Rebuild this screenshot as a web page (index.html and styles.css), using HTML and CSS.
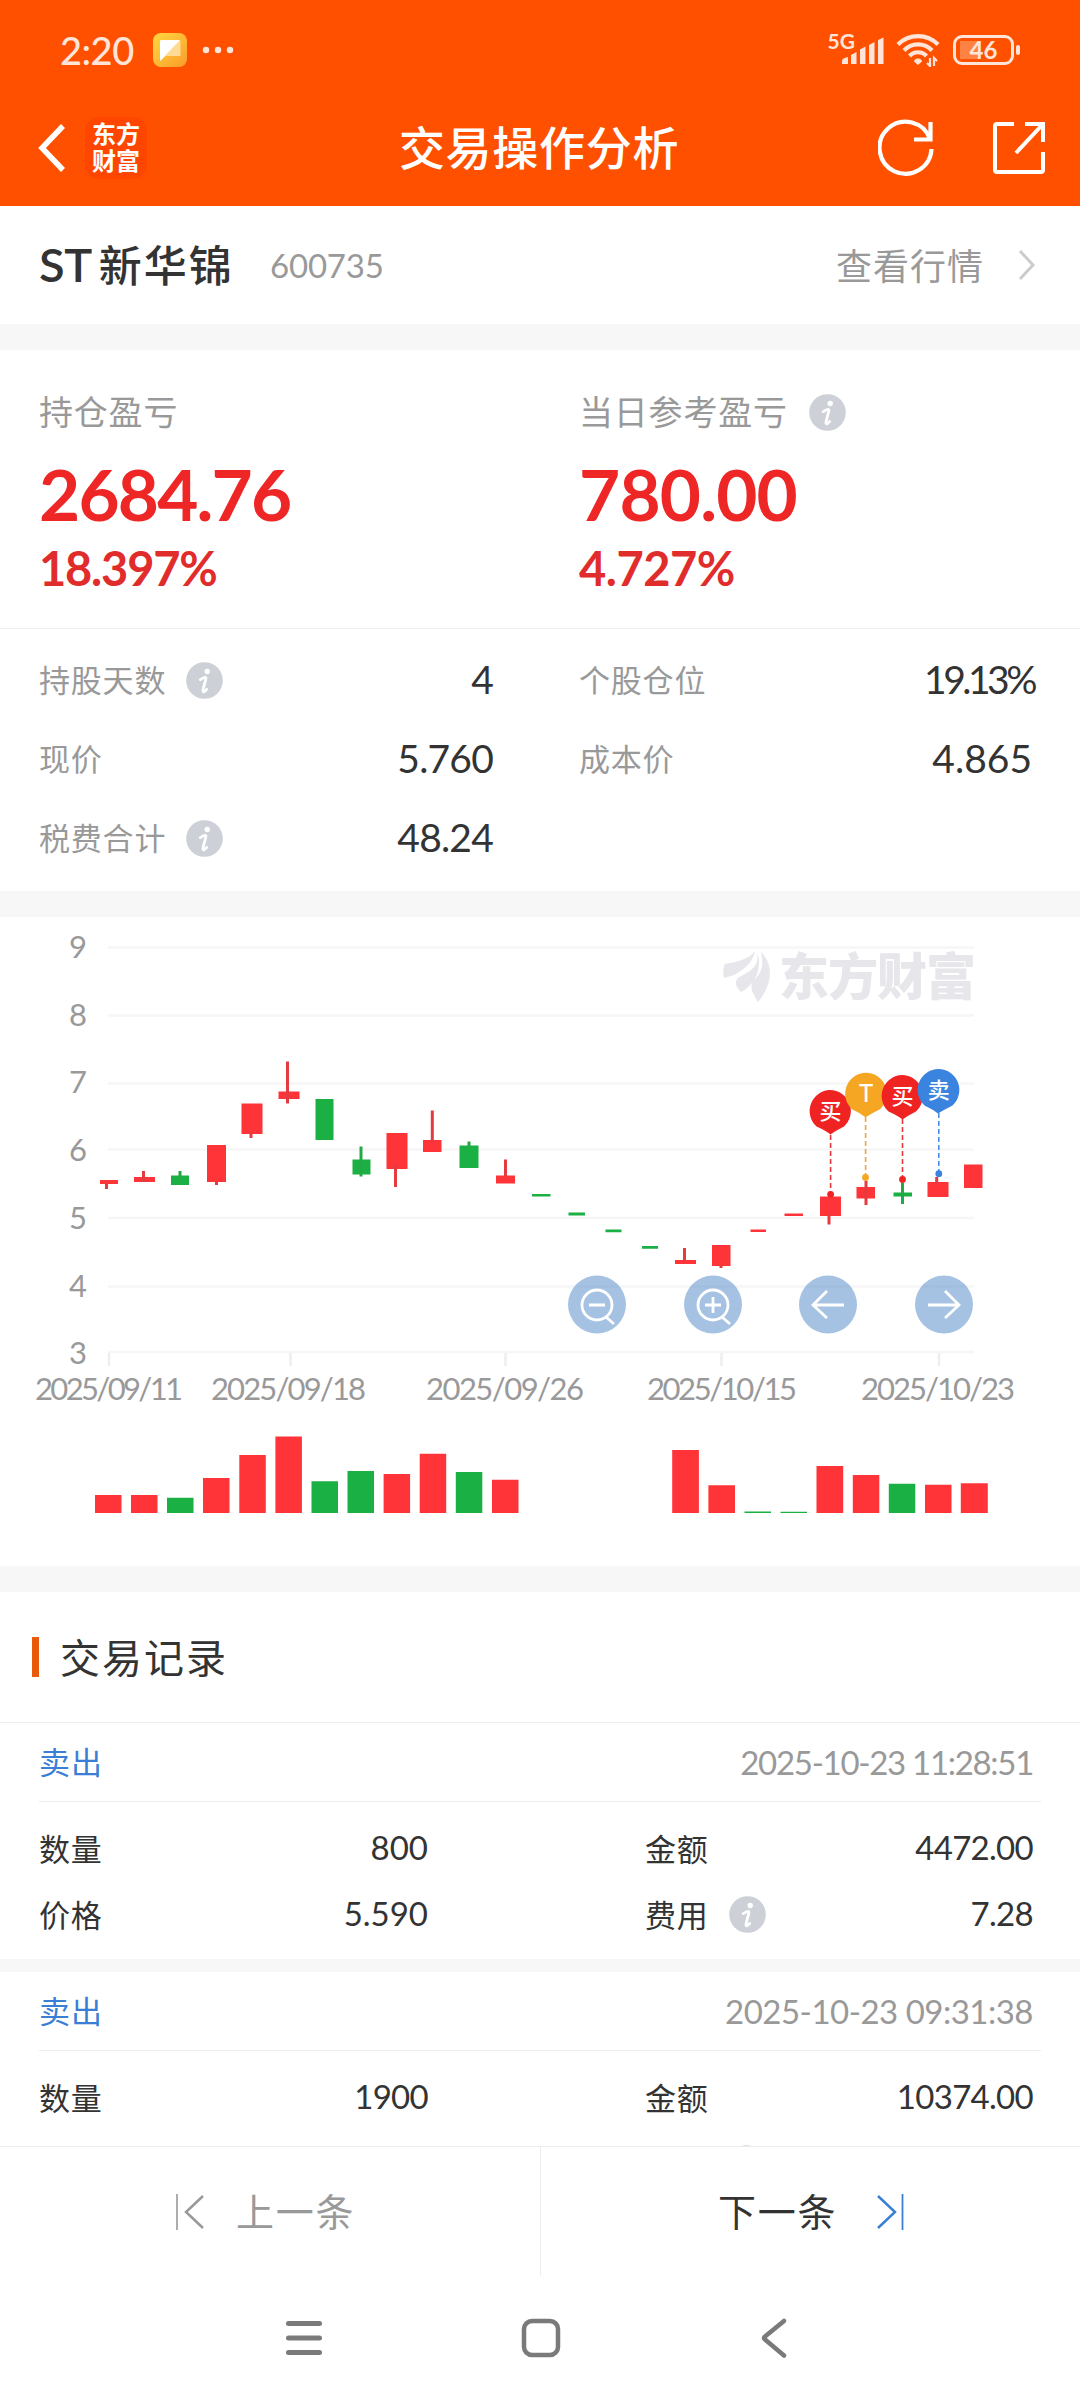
FILE: index.html
```html
<!DOCTYPE html>
<html lang="zh-CN">
<head>
  <meta charset="UTF-8">
  <meta name="viewport" content="width=device-width, initial-scale=1.0">
  <title>交易操作分析</title>
  <link rel="stylesheet" href="styles.css">
</head>
<body>
  <!-- shared icon -->
  <svg class="defs" width="0" height="0">
    <symbol id="info" viewBox="0 0 37 37">
      <circle cx="18.5" cy="18.5" r="18.3" fill="#cdd0d6"/>
      <circle cx="21.2" cy="9.500" r="2.700" fill="#fff"/>
      <path d="M14.300 17.600c2.400-1.700 4-2.500 5-2.200.9.2.6 1.500.2 3l-2.300 8.600c-.4 1.900-.2 3 .6 2.800.9-.2 1.900-1.200 2.900-2.400" fill="none" stroke="#fff" stroke-width="2.800" stroke-linecap="round"/>
    </symbol>
  </svg>
  <div class="page">
    <header class="top">
      <div class="status">
        <span class="clock">2:20</span>
        <svg class="app-icon" width="34" height="34" viewBox="0 0 34 34">
          <defs>
            <linearGradient id="gold" x1="0" y1="0" x2="1" y2="1">
              <stop offset="0" stop-color="#ffd83f"/>
              <stop offset="1" stop-color="#fb9c2b"/>
            </linearGradient>
          </defs>
          <rect width="34" height="34" rx="8" fill="url(#gold)"/>
          <path d="M9 7h17a1.500 1.500 0 0 1 1.500 1.500V23H13l-6 5V8.500A1.500 1.500 0 0 1 9 7z" fill="#ffdb96"/>
          <path d="M9 7h18L7 28V8.500A1.500 1.500 0 0 1 9 7z" fill="#fff"/>
        </svg>
        <svg class="dots" width="32" height="8" viewBox="0 0 32 8" fill="#ffe5d9">
          <circle cx="4" cy="4" r="3.200"/><circle cx="16" cy="4" r="3.200"/><circle cx="28" cy="4" r="3.200"/>
        </svg>
        <span class="net">5G</span>
        <svg class="signal" width="42" height="28" viewBox="0 0 42 28" fill="#ffe5d9">
          <path d="M0 27v-3q0-3 6-4v7zM9 27V18l5.500-3v12zM18 27V12.500l5.500-3V27zM27 27V8l5.500-3V27zM36 27V3l5.500-2.500V27z"/>
        </svg>
        <svg class="wifi" width="44" height="34" viewBox="0 0 44 34" fill="none" stroke="#ffe5d9" stroke-width="4.200">
          <path d="M2 11.500a28 28 0 0 1 40 0M8 17.500a19 19 0 0 1 28 0M13.500 23a11.500 11.500 0 0 1 17 0"/>
          <path d="M22 25.500c2.500 0 4 1.500 4 3L22 32l-4-3.500c0-1.500 1.500-3 4-3z" fill="#ffe5d9" stroke="none"/>
          <path d="M34 25v8l-3-3M38 33v-8l3 3" stroke-width="2.200"/>
        </svg>
        <div class="battery">
          <span>46</span>
          <svg width="5" height="10" viewBox="0 0 5 10"><rect width="4" height="10" rx="2" fill="#ffe5d9"/></svg>
        </div>
      </div>
      <div class="navbar">
        <div class="nav-left">
          <svg width="30" height="50" viewBox="0 0 30 50" fill="none" stroke="#fff" stroke-width="5.500">
            <path d="M27 3L6 25l21 22"/>
          </svg>
          <div class="brand">东方<br>财富</div>
        </div>
        <h1>交易操作分析</h1>
        <div class="nav-right">
          <svg width="57" height="58" viewBox="0 0 57 58" fill="none" stroke="#fff" stroke-width="4.200">
            <path d="M53.500 30A26 26 0 1 1 52 20"/>
            <path d="M52.500 3v17.500H36"/>
          </svg>
          <svg width="54" height="54" viewBox="0 0 54 54" fill="none" stroke="#fff" stroke-width="4">
            <path d="M22 3H5q-2 0-2 2v44q0 2 2 2h44q2 0 2-2V31"/>
            <path d="M33 3h18v18M51 3L24 32"/>
          </svg>
        </div>
      </div>
    </header>

    <section class="stock">
      <h2>ST<span class="cn">新华锦</span></h2>
      <span class="code">600735</span>
      <span class="quote">查看行情</span>
      <svg width="18" height="32" viewBox="0 0 18 32" fill="none" stroke="#ccc" stroke-width="3">
        <path d="M2 2l13 14L2 30"/>
      </svg>
    </section>

    <section class="summary">
      <div class="profit">
        <div class="label">持仓盈亏</div>
        <div class="amount">2684.76</div>
        <div class="percent">18.397%</div>
      </div>
      <div class="profit">
        <div class="label">当日参考盈亏<svg class="info"><use href="#info"/></svg></div>
        <div class="amount wide">780.00</div>
        <div class="percent wide">4.727%</div>
      </div>
    </section>

    <section class="details">
      <div class="item"><span>持股天数<svg class="info"><use href="#info"/></svg></span><b>4</b></div>
      <div class="item"><span>个股仓位</span><b class="tight">19.13%</b></div>
      <div class="item"><span>现价</span><b>5.760</b></div>
      <div class="item"><span>成本价</span><b class="wide">4.865</b></div>
      <div class="item"><span>税费合计<svg class="info"><use href="#info"/></svg></span><b>48.24</b></div>
    </section>

    <section class="chart">
      <svg width="1080" height="649" viewBox="0 917 1080 649">
        <!-- grid -->
        <path d="M108 947.500h866M108 1015.500h866M108 1083.500h866M108 1149.500h866M108 1218h866M108 1286.500h866M108 1352h866" stroke="#f6f6f6" stroke-width="2.500"/>
        <path d="M109 1353v13M290.500 1353v13M505.500 1353v13M721.500 1353v13M939 1353v13" stroke="#eee" stroke-width="2.500"/>
        <g class="axis" text-anchor="end">
          <text x="87" y="958">9</text>
          <text x="87" y="1026">8</text>
          <text x="87" y="1093">7</text>
          <text x="87" y="1161">6</text>
          <text x="87" y="1228.500">5</text>
          <text x="87" y="1297">4</text>
          <text x="87" y="1364">3</text>
        </g>
        <g class="axis">
          <text x="35" y="1400" textLength="148">2025/09/11</text>
          <text x="211" y="1400" textLength="155">2025/09/18</text>
          <text x="426" y="1400" textLength="158">2025/09/26</text>
          <text x="647" y="1400" textLength="150">2025/10/15</text>
          <text x="861" y="1400" textLength="154">2025/10/23</text>
        </g>

        <!-- watermark -->
        <g fill="#e6e6eb">
          <path d="M755 951c-6 8-17 11-30 13-2 3-2 9-1 14 14-3 28-12 31-27z"/>
          <path d="M757 952c3 15-7 19-19 26-5 5 0 11 3 14 14-7 22-24 16-40z"/>
          <path d="M761 952c3 14 1 20-7 28-6 7 0 15 4 22 12-14 18-35 3-50z"/>
          <text x="779" y="995" class="mark" textLength="197">东方财富</text>
        </g>

        <!-- candles -->
        <g fill="#fe3438">
          <path d="M100 1180h18v4h-18zM134 1177h21v5h-21zM207 1145h19v37h-19zM241.500 1103.500h21v30.500h-21zM278.500 1091.500h21v7.500h-21zM386.500 1133h21v36h-21zM423 1140h18.500v12H423zM496 1175.500h19v8h-19z"/>
          <path d="M675 1260h21v4h-21zM712 1245h18.500v21H712zM750.500 1229.500H766v2.500h-15.500zM784.500 1213.500h18.500v2.500h-18.500zM820 1196.500h21v19.500h-21zM856.500 1187H875v11.500h-18.500zM927.500 1182h21v15h-21zM964 1164.500h18.500V1188H964z"/>
        </g>
        <path d="M106.500 1182v7M143.500 1171v11M216.500 1180v5M251 1132v6M287.500 1061.500v42M395.500 1165v22M432.300 1110.500V1142M505.500 1159.500V1177M684.500 1248v13M721 1265v3M829 1214v10.500M866 1181v24M936.700 1177v8" stroke="#e33b3f" stroke-width="3"/>
        <path fill="#1bb043" d="M171 1175.500h18v9.500h-18zM315.500 1099h18v41h-18zM352.500 1159.500h18v15h-18zM459.500 1145.500h19v22.500h-19zM532 1194h18.500v2.500H532zM568.500 1212.500h16.500v3h-16.500zM605.500 1229.500h16v2.700h-16zM642 1246h16v2.700h-16zM893.500 1192.500H912v4h-18.500z"/>
        <path d="M180 1171v6M361 1146.500v30M469 1141.500v5M902.500 1183v21" stroke="#24a847" stroke-width="3"/>

        <!-- trade markers -->
        <g fill="none" stroke-width="1.600" stroke-dasharray="5 3">
          <path d="M830.600 1135v58" stroke="#e03a3a"/>
          <path d="M865.600 1117v58" stroke="#eba63a"/>
          <path d="M902.500 1119v58" stroke="#e03a3a"/>
          <path d="M938.800 1113v58" stroke="#4a8fdf"/>
        </g>
        <g class="pins" text-anchor="middle">
          <g fill="#f02323">
            <path d="M830 1090a21 21 0 0 1 14 36.500q-8 4-13.500 8-5-4-14-8A21 21 0 0 1 830 1090z"/>
            <circle cx="830.600" cy="1194.300" r="3.400"/>
          </g>
          <text x="830.500" y="1119">买</text>
          <g fill="#f5a623">
            <path d="M866 1072.700a21 21 0 0 1 14 36.500q-8 4-14.500 8-5-4-13.500-8a21 21 0 0 1 14-36.500z"/>
            <circle cx="865.500" cy="1177.500" r="3.400"/>
          </g>
          <text x="866" y="1101.500" class="t">T</text>
          <g fill="#f02323">
            <path d="M902 1075a21 21 0 0 1 14 36.500q-8 4-13.500 8-5-4-14-8A21 21 0 0 1 902 1075z"/>
            <circle cx="902.500" cy="1179.500" r="3.400"/>
          </g>
          <text x="902.500" y="1104">买</text>
          <g fill="#3a84e0">
            <path d="M938.500 1069a21 21 0 0 1 14 36.500q-8 4-14.500 8-5-4-13.500-8a21 21 0 0 1 14-36.500z"/>
            <circle cx="938.800" cy="1173.700" r="3.400"/>
          </g>
          <text x="938.800" y="1098">卖</text>
        </g>

        <!-- zoom / pan buttons -->
        <g fill="#4d86c8" fill-opacity=".5">
          <circle cx="597" cy="1304.500" r="29"/>
          <circle cx="713" cy="1304.500" r="29"/>
          <circle cx="828" cy="1304.500" r="29"/>
          <circle cx="944" cy="1304.500" r="29"/>
        </g>
        <g fill="none" stroke="#fff" stroke-width="2.800">
          <circle cx="597" cy="1305" r="15"/>
          <path d="M589 1305h16M606 1317l8 7"/>
          <circle cx="713" cy="1305" r="15"/>
          <path d="M705 1305h16M713 1297v16M722 1317l8 7"/>
          <path d="M844 1305h-31M827 1291l-14 14 14 13"/>
          <path d="M928 1305h31M945 1291l14 14-14 13"/>
        </g>

        <!-- volume -->
        <path fill="#fe3438" d="M95 1495h26.500v18H95zM131 1495h26.500v18H131zM203 1478h26.500v35H203zM239.300 1455h26.500v58h-26.500zM275.400 1436.500h26.500v76.500h-26.500zM383.600 1474h26.500v39h-26.500zM419.700 1453.700h26.500V1513h-26.500zM492 1479.700h26.500V1513H492zM672.200 1450h26.700v63h-26.700zM708.400 1485.300H735V1513h-26.600zM816.500 1466h26.700v47h-26.700zM852.800 1475h26.500v38h-26.500zM925 1484.700h26.500V1513H925zM960.800 1483.300h27V1513h-27z"/>
        <path fill="#1bb043" d="M167 1497.700h26.500V1513H167zM311.500 1481.300H338V1513h-26.500zM347.500 1471H374v42h-26.500zM455.800 1472h26.500v41h-26.500zM744.500 1511.500H771v1.500h-26.500zM780.500 1511.700H807v1.300h-26.500zM888.800 1483.700h26.500V1513h-26.500z"/>
      </svg>
    </section>

    <section class="records">
      <h3>交易记录</h3>
      <article class="record">
        <div class="record-head"><span class="side">卖出</span><time class="tight">2025-10-23 11:28:51</time></div>
        <div class="record-body">
          <span>数量</span><b>800</b><span>金额</span><b class="tight">4472.00</b>
          <span>价格</span><b>5.590</b><span>费用<svg class="info"><use href="#info"/></svg></span><b class="tight">7.28</b>
        </div>
      </article>
      <article class="record">
        <div class="record-head"><span class="side">卖出</span><time>2025-10-23 09:31:38</time></div>
        <div class="record-body">
          <span>数量</span><b class="tight">1900</b><span>金额</span><b class="tight">10374.00</b>
          <span></span><b></b><span class="fee"><svg class="info"><use href="#info"/></svg></span>
        </div>
      </article>
    </section>

    <footer class="pager">
      <div class="prev">
        <svg width="30" height="38" viewBox="0 0 30 38" fill="none" stroke="#999" stroke-width="2.500">
          <path d="M2 1v36" stroke-width="1.600"/><path d="M28 3L11 19l17 16"/>
        </svg>
        <span>上一条</span>
      </div>
      <div class="next">
        <span>下一条</span>
        <svg width="30" height="38" viewBox="0 0 30 38" fill="none" stroke="#3a7fd5" stroke-width="2.500">
          <path d="M2 3l17 16L2 35"/><path d="M26.500 1v36" stroke-width="1.800"/>
        </svg>
      </div>
    </footer>

    <div class="sysnav">
      <svg width="36" height="40" viewBox="0 0 36 40" stroke="#7a7a7a" stroke-width="5" stroke-linecap="round">
        <path d="M2.500 5.500h31M2.500 20h31M2.500 34.500h31"/>
      </svg>
      <svg width="40" height="40" viewBox="0 0 40 40" fill="none" stroke="#7a7a7a" stroke-width="4.500">
        <rect x="3" y="3" width="34" height="34" rx="8"/>
      </svg>
      <svg width="28" height="42" viewBox="0 0 28 42" fill="none" stroke="#7a7a7a" stroke-width="4.500" stroke-linecap="round" stroke-linejoin="round">
        <path d="M24 4L5 19.500q-2 1.500 0 3L24 38.500"/>
      </svg>
    </div>
  </div>
</body>
</html>
```

FILE: styles.css
```css
* {
  box-sizing: border-box;
}
body {
  margin: 0;
  background: #fff;
  color: #333;
  font-family: Lato, "Noto Sans CJK SC", sans-serif;
}
h1, h2, h3 {
  margin: 0;
}
svg {
  display: block;
  flex: none;
}
b {
  font-weight: 400;
}
.defs {
  position: absolute;
}
.page {
  width: 1080px;
  height: 2400px;
  overflow: hidden;
  display: flex;
  flex-direction: column;
}
.info {
  width: 37px;
  height: 37px;
}

/* status bar + title bar */
.top {
  height: 206px;
  flex: none;
  background: #ff5000;
  color: #fff;
}
.status {
  height: 100px;
  padding: 0 59px 0 60px;
  display: flex;
  align-items: center;
  color: #ffe5d9;
}
.clock {
  width: 93px;
  font-size: 38px;
  font-weight: 500;
  letter-spacing: -0.5px;
}
.dots {
  margin-left: 15px;
}
.net {
  margin: 0 -13px 18px auto;
  font-size: 21px;
  line-height: 26px;
  font-weight: 700;
}
.wifi {
  margin-left: 12px;
}
.signal {
  margin-top: 1px;
}
.battery {
  margin-left: 13px;
  display: flex;
  align-items: center;
  gap: 2px;
}
.battery span {
  width: 61px;
  height: 30px;
  border: 3px solid #ffe5d9;
  border-radius: 9px;
  background: linear-gradient(90deg, transparent 4px, #ff8245 4px, #ff8245 25px, transparent 25px) 0 3px / 100% 18px no-repeat;
  font-size: 24px;
  line-height: 24px;
  font-weight: 700;
  text-align: center;
}
.navbar {
  height: 96px;
  padding: 0 34px 0 36px;
  display: grid;
  grid-template-columns: 1fr auto 1fr;
  align-items: center;
}
.navbar h1 {
  margin-right: 4px;
  font-size: 46px;
  line-height: 60px;
  font-weight: 500;
  letter-spacing: 0.700px;
}
.nav-left {
  display: flex;
  align-items: center;
  gap: 19px;
}
.nav-right {
  display: flex;
  align-items: center;
  justify-content: flex-end;
  gap: 57px;
}
.brand {
  width: 62px;
  height: 62px;
  padding-top: 3px;
  border-radius: 13px;
  background: #ff4600;
  font-size: 24px;
  line-height: 27px;
  font-weight: 700;
  text-align: center;
}

/* stock name */
.stock {
  height: 118px;
  flex: none;
  padding: 0 44px 0 39px;
  display: flex;
  align-items: center;
}
.stock h2 {
  width: 231px;
  padding-bottom: 1px;
  font-size: 47px;
  line-height: 60px;
  font-weight: 600;
  letter-spacing: -0.500px;
}
.stock .cn {
  margin-left: 7px;
  font-size: 43px;
  font-weight: 500;
  letter-spacing: 2px;
}
.code {
  font-size: 33px;
  letter-spacing: -0.200px;
  color: #999;
}
.quote {
  margin-left: auto;
  margin-right: 34px;
  padding-bottom: 3px;
  font-size: 36px;
  letter-spacing: 1px;
  color: #999;
}

/* profit */
.summary {
  height: 305px;
  flex: none;
  border-top: 26px solid #f7f7f7;
  border-bottom: 1px solid #ededed;
  display: grid;
  grid-template-columns: 540px 540px;
}
.profit {
  padding: 36px 0 0 39px;
}
.label {
  display: flex;
  align-items: center;
  gap: 21px;
  height: 48px;
  font-size: 34px;
  letter-spacing: 0.800px;
  color: #999;
}
.label .info {
  margin-top: 4px;
}
.amount {
  margin-top: 18px;
  height: 84px;
  font-size: 71px;
  line-height: 84px;
  font-weight: 700;
  letter-spacing: -1.800px;
  color: #ee2626;
}
.amount.wide {
  letter-spacing: -0.800px;
}
.percent {
  margin-top: 5px;
  height: 54px;
  font-size: 47px;
  line-height: 54px;
  font-weight: 700;
  letter-spacing: -1.200px;
  color: #e12c2c;
}
.percent.wide {
  letter-spacing: -0.500px;
}
.details {
  height: 262px;
  flex: none;
  padding-top: 10px;
  display: grid;
  grid-template-columns: 454px 453px;
  grid-auto-rows: 79px;
  column-gap: 86px;
  padding-left: 39px;
}
.item {
  display: flex;
  align-items: center;
  justify-content: space-between;
}
.item span {
  display: flex;
  align-items: center;
  gap: 20px;
  font-size: 31px;
  letter-spacing: 0.800px;
  color: #999;
}
.item .info {
  margin-top: 3px;
}
.item b {
  font-size: 39px;
  letter-spacing: -0.800px;
}
.item .tight {
  margin-right: -2px;
  letter-spacing: -3.500px;
}
.item .wide {
  letter-spacing: 0;
}

/* chart */
.chart {
  height: 675px;
  flex: none;
  border-top: 26px solid #f7f7f7;
}
.axis {
  font-size: 31px;
  fill: #999;
}
.mark {
  font-size: 50px;
  font-weight: 900;
}
.pins text {
  font-size: 22px;
  font-weight: 500;
  fill: #fff;
}
.pins .t {
  font-size: 24px;
  font-weight: 500;
}

/* trade records */
.records {
  height: 580px;
  flex: none;
  overflow: hidden;
  border-top: 26px solid #f7f7f7;
}
.records h3 {
  height: 131px;
  padding: 0 0 2px 32px;
  border-bottom: 1px solid #ededed;
  display: flex;
  align-items: center;
  font-size: 40px;
  font-weight: 400;
  letter-spacing: 2px;
}
.records h3::before {
  content: "";
  width: 7px;
  height: 40px;
  margin: 2px 21px 0 0;
  background: #e8590c;
}
.record {
  height: 249px;
  border-bottom: 13px solid #f7f7f7;
}
.record-head {
  height: 79px;
  margin: 0 39px;
  padding-right: 8px;
  border-bottom: 1px solid #ededed;
  display: flex;
  align-items: center;
  justify-content: space-between;
}
.side {
  padding-bottom: 4px;
  font-size: 31px;
  letter-spacing: 1px;
  color: #3a7fd5;
}
.record-head time {
  font-size: 33px;
  letter-spacing: -0.500px;
  color: #999;
}
.record-head .tight {
  letter-spacing: -1.300px;
}
.record-body {
  padding: 12px 47px 0 39px;
  display: grid;
  grid-template-columns: 140px 249px 219px 1fr;
  grid-template-columns: 140px 249px 217px 217px 1fr;
  grid-auto-rows: 66px;
  align-items: center;
  font-size: 31px;
}
.record-body span {
  display: flex;
  align-items: center;
  gap: 20px;
  letter-spacing: 0.800px;
}
.record-body span:nth-of-type(odd) {
  grid-column: 1;
}
.record-body span:nth-of-type(even) {
  grid-column: 4;
}
.record-body b {
  font-size: 33px;
  text-align: right;
  white-space: nowrap;
}
.record-body .tight {
  letter-spacing: -0.700px;
}
.record-body .info {
  margin-top: 2px;
}
.record-body .fee {
  padding-left: 83px;
}

/* bottom bars */
.pager {
  height: 130px;
  flex: none;
  border-top: 1px solid #ededed;
  display: grid;
  grid-template-columns: 541px 539px;
  font-size: 38px;
  letter-spacing: 1.700px;
}
.pager > div {
  display: flex;
  align-items: center;
}
.pager span {
  padding-bottom: 5px;
}
.prev {
  padding-left: 175px;
  gap: 31px;
  border-right: 1px solid #ededed;
  color: #999;
}
.next {
  padding-left: 177px;
  gap: 39px;
}
.sysnav {
  height: 124px;
  flex: none;
  padding: 0 292px 0 286px;
  display: flex;
  align-items: center;
  justify-content: space-between;
}
```
